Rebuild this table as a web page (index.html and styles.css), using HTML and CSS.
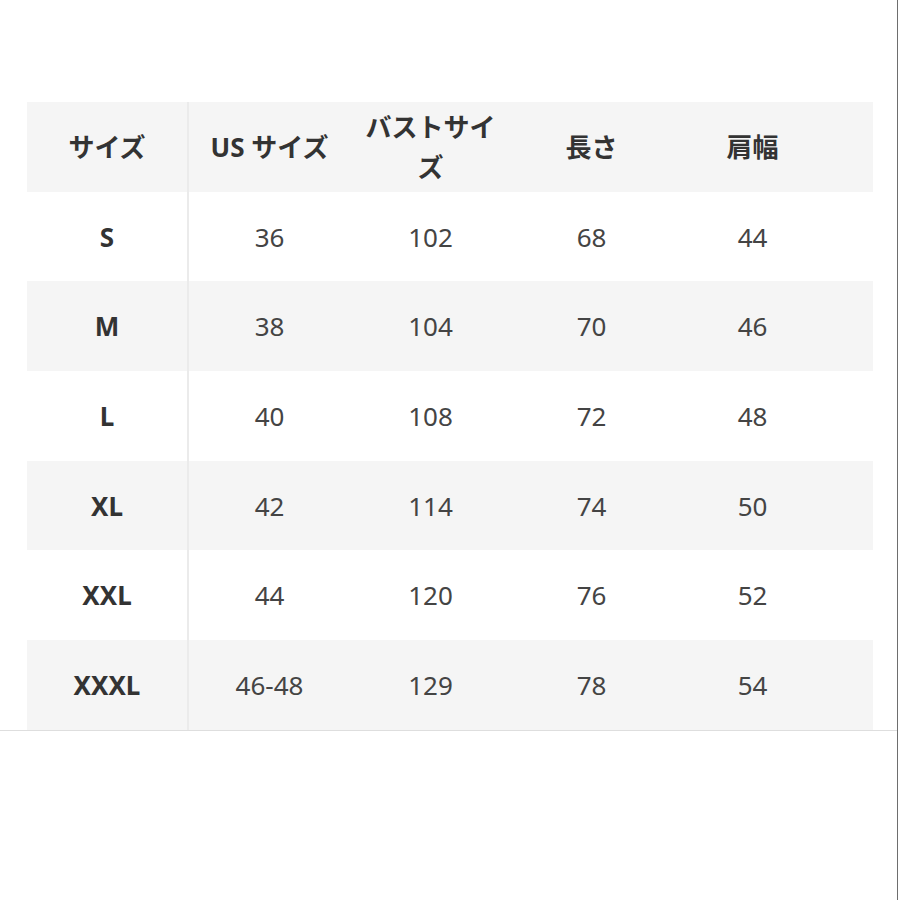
FILE: index.html
```html
<!DOCTYPE html>
<html lang="ja">
<head>
<meta charset="utf-8">
<link rel="stylesheet" href="styles.css">
</head>
<body>
<div class="page">
  <div class="table">
    <div class="row head">
      <div class="cell first">サイズ</div>
      <div class="cell">US サイズ</div>
      <div class="cell wrap">バストサイズ</div>
      <div class="cell">長さ</div>
      <div class="cell">肩幅</div>
      <div class="cell"></div>
    </div>
    <div class="row">
      <div class="cell first">S</div>
      <div class="cell">36</div>
      <div class="cell">102</div>
      <div class="cell">68</div>
      <div class="cell">44</div>
      <div class="cell"></div>
    </div>
    <div class="row alt">
      <div class="cell first">M</div>
      <div class="cell">38</div>
      <div class="cell">104</div>
      <div class="cell">70</div>
      <div class="cell">46</div>
      <div class="cell"></div>
    </div>
    <div class="row">
      <div class="cell first">L</div>
      <div class="cell">40</div>
      <div class="cell">108</div>
      <div class="cell">72</div>
      <div class="cell">48</div>
      <div class="cell"></div>
    </div>
    <div class="row alt">
      <div class="cell first">XL</div>
      <div class="cell">42</div>
      <div class="cell">114</div>
      <div class="cell">74</div>
      <div class="cell">50</div>
      <div class="cell"></div>
    </div>
    <div class="row">
      <div class="cell first">XXL</div>
      <div class="cell">44</div>
      <div class="cell">120</div>
      <div class="cell">76</div>
      <div class="cell">52</div>
      <div class="cell"></div>
    </div>
    <div class="row alt">
      <div class="cell first">XXXL</div>
      <div class="cell">46-48</div>
      <div class="cell">129</div>
      <div class="cell">78</div>
      <div class="cell">54</div>
      <div class="cell"></div>
    </div>
  </div>
  <div class="rule"></div>
</div>
</body>
</html>
```
FILE: styles.css
```css
html, body {
  margin: 0;
  padding: 0;
  background: #ffffff;
}
.page {
  width: 898px;
  height: 900px;
  border-right: 1px solid #6e6e6e;
  padding-top: 102px;
  box-sizing: border-box;
  font-family: "Noto Sans", "Open Sans", "Noto Sans CJK JP", sans-serif;
  color: #444444;
}
.table {
  margin-left: 27px;
  width: 846px;
}
.row {
  display: grid;
  grid-template-columns: 162px repeat(4, 161px) 1fr;
  height: 89.7px;
  background: #ffffff;
}
.row.head,
.row.alt {
  background: #f5f5f5;
}
.cell {
  display: flex;
  align-items: center;
  justify-content: center;
  text-align: center;
  font-size: 26px;
  line-height: 40px;
  font-weight: 400;
  padding: 0 10px;
}
.cell.first {
  border-right: 2px solid #ebebeb;
  font-weight: 700;
  color: #333333;
}
.head .cell {
  font-family: "Noto Sans", "Noto Sans CJK JP", sans-serif;
  font-weight: 700;
  color: #333333;
}
.head .cell.wrap {
  padding: 0 12px;
}
.rule {
  height: 0;
  border-top: 1px solid #dedede;
}
```
